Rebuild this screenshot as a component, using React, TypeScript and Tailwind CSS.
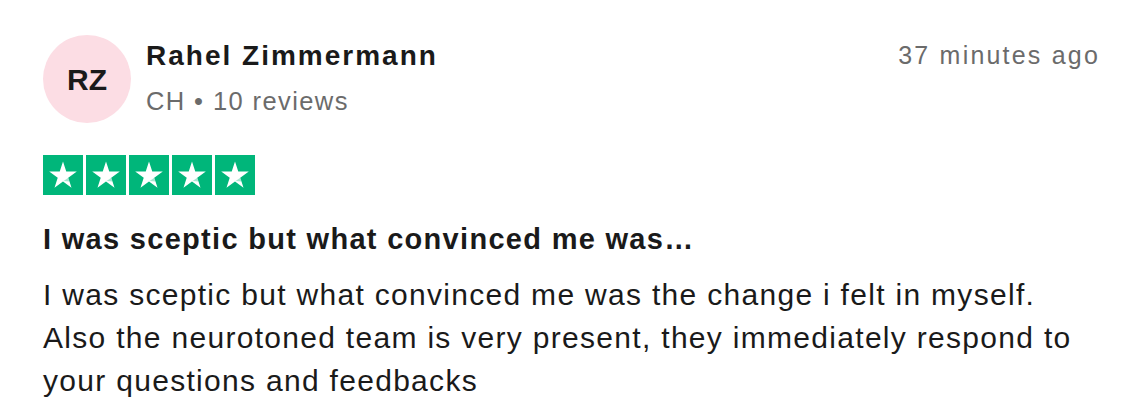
import React from 'react';

const Star: React.FC = () => (
  <div className="flex h-[40px] w-[40px] items-center justify-center bg-[#00b67a]">
    <svg width="40" height="40" viewBox="0 0 40 40">
      <polygon
        fill="#ffffff"
        points="20,6.5 23.26,16.52 33.79,16.52 25.27,22.71 28.52,32.73 20,26.54 11.48,32.73 14.73,22.71 6.21,16.52 16.74,16.52"
      />
      <polygon fill="#00b67a" fillOpacity="0.35" points="20.6,26.1 25.27,22.71 26.4,26.4" />
    </svg>
  </div>
);

export default function App() {
  return (
    <div className="min-h-screen w-[1136px] bg-white pl-[43px] pr-[36px] pt-[35px] text-[#1a1a1a] [font-family:'Liberation_Sans',Arial,sans-serif]">
      {/* Header */}
      <div className="flex items-start">
        <div className="flex h-[88px] w-[88px] shrink-0 items-center justify-center rounded-full bg-[#fcdde4] text-[30px] font-bold">
          RZ
        </div>
        <div className="ml-[15px] flex flex-col">
          <div className="mt-[5px] text-[28px] font-bold leading-[32px] tracking-[2px]">
            Rahel Zimmermann
          </div>
          <div className="mt-[13px] text-[25.5px] leading-[32px] tracking-[1.4px] text-[#6b6b6b]">
            CH • 10 reviews
          </div>
        </div>
        <div className="ml-auto mt-[4px] text-[25px] leading-[32px] tracking-[2.2px] text-[#6b6b6b]">
          37 minutes ago
        </div>
      </div>

      {/* Rating */}
      <div className="mt-[32px] flex gap-[3px]">
        <Star />
        <Star />
        <Star />
        <Star />
        <Star />
      </div>

      {/* Title */}
      <h2 className="mt-[26px] text-[29px] font-bold leading-[36px] tracking-[1.3px]">
        I was sceptic but what convinced me was…
      </h2>

      {/* Body */}
      <p className="mt-[16px] w-[1046px] text-[30px] leading-[43px] tracking-[1.3px]">
        I was sceptic but what convinced me was the change i felt in myself. Also the neurotoned team is very present, they immediately respond to your questions and feedbacks
      </p>
    </div>
  );
}
